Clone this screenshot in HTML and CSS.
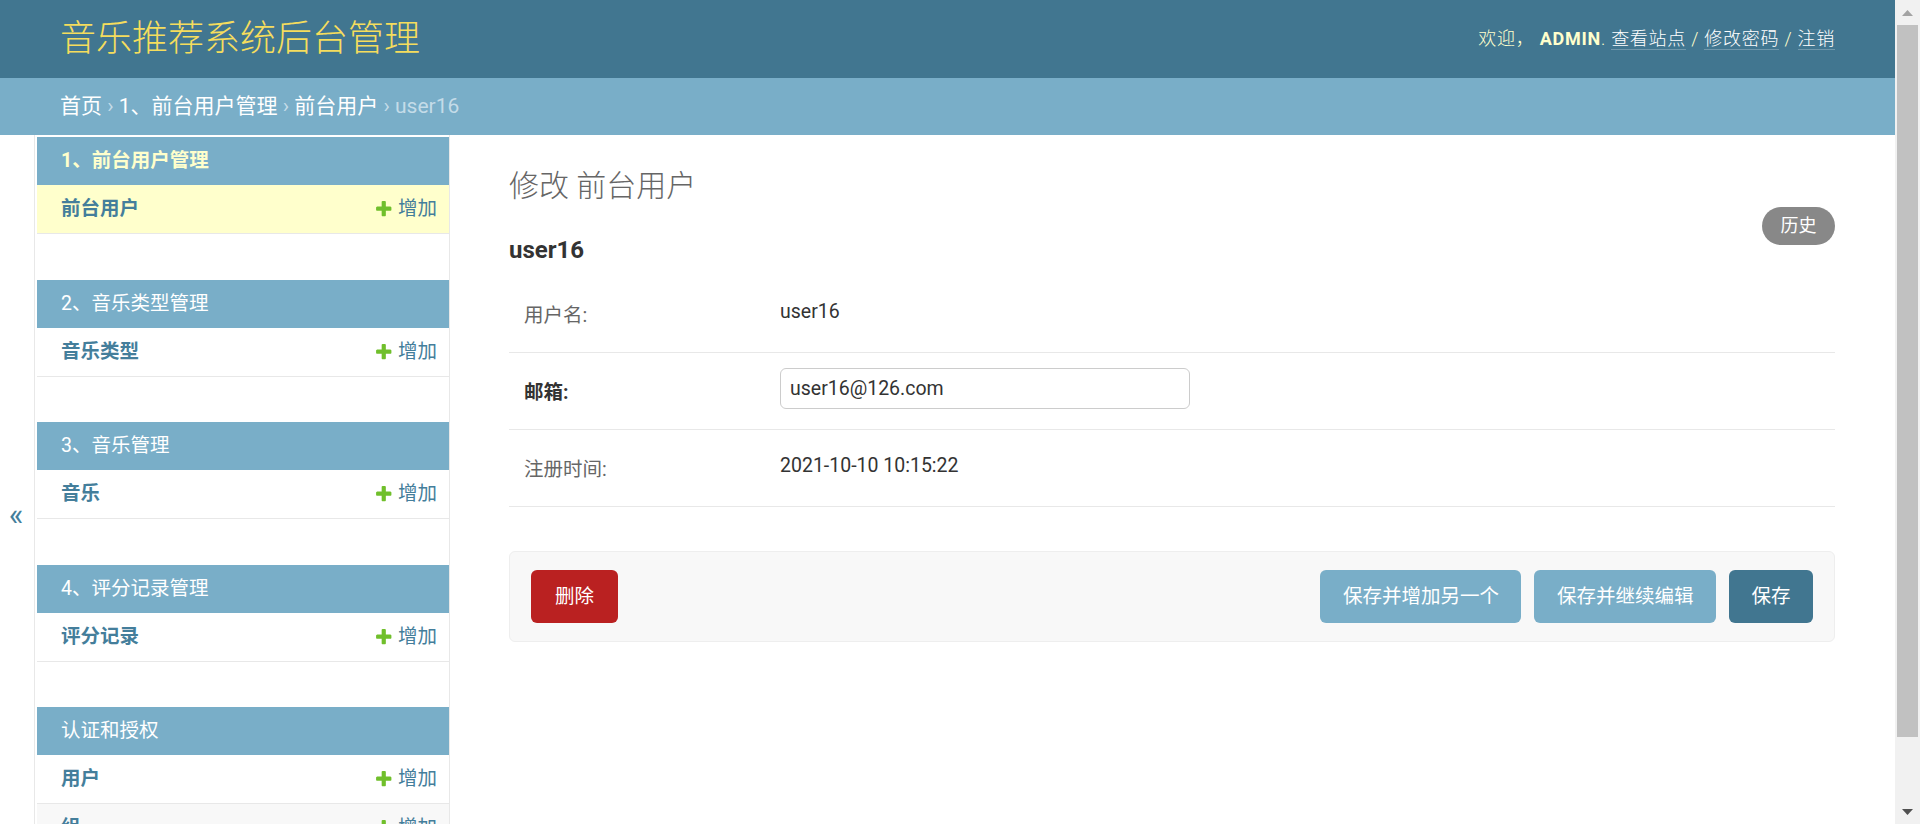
FILE: index.html
```html
<!DOCTYPE html>
<html lang="zh-CN">
<head>
<meta charset="utf-8">
<title>修改 前台用户 | 音乐推荐系统后台管理</title>
<link rel="stylesheet" href="styles.css">
</head>
<body>
<div class="viewport">
  <div class="page">
    <header class="header">
      <div class="branding"><h1 class="site-name"><a href="#">音乐推荐系统后台管理</a></h1></div>
      <div class="user-tools">欢迎， <strong>admin</strong>. <a href="#">查看站点</a> / <a href="#">修改密码</a> / <a href="#">注销</a></div>
    </header>
    <div class="breadcrumbs"><a href="#">首页</a> › <a href="#">1、前台用户管理</a> › <a href="#">前台用户</a> › user16</div>
    <div class="main">
      <div class="toggle-col"><button class="toggle-nav" type="button">«</button></div>
      <nav class="nav-sidebar">
        <div class="module current-app">
          <div class="caption"><a href="#">1、前台用户管理</a></div>
          <div class="model-row current-model"><a class="model-link" href="#">前台用户</a><a class="addlink" href="#"><svg class="plus" viewBox="0 0 1792 1792"><path fill="#70bf2b" d="M1600 796v192q0 40-28 68t-68 28h-416v416q0 40-28 68t-68 28h-192q-40 0-68-28t-28-68v-416h-416q-40 0-68-28t-28-68v-192q0-40 28-68t68-28h416v-416q0-40 28-68t68-28h192q40 0 68 28t28 68v416h416q40 0 68 28t28 68z"/></svg>增加</a></div>
        </div>
        <div class="module">
          <div class="caption"><a href="#">2、音乐类型管理</a></div>
          <div class="model-row"><a class="model-link" href="#">音乐类型</a><a class="addlink" href="#"><svg class="plus" viewBox="0 0 1792 1792"><path fill="#70bf2b" d="M1600 796v192q0 40-28 68t-68 28h-416v416q0 40-28 68t-68 28h-192q-40 0-68-28t-28-68v-416h-416q-40 0-68-28t-28-68v-192q0-40 28-68t68-28h416v-416q0-40 28-68t68-28h192q40 0 68 28t28 68v416h416q40 0 68 28t28 68z"/></svg>增加</a></div>
        </div>
        <div class="module">
          <div class="caption"><a href="#">3、音乐管理</a></div>
          <div class="model-row"><a class="model-link" href="#">音乐</a><a class="addlink" href="#"><svg class="plus" viewBox="0 0 1792 1792"><path fill="#70bf2b" d="M1600 796v192q0 40-28 68t-68 28h-416v416q0 40-28 68t-68 28h-192q-40 0-68-28t-28-68v-416h-416q-40 0-68-28t-28-68v-192q0-40 28-68t68-28h416v-416q0-40 28-68t68-28h192q40 0 68 28t28 68v416h416q40 0 68 28t28 68z"/></svg>增加</a></div>
        </div>
        <div class="module">
          <div class="caption"><a href="#">4、评分记录管理</a></div>
          <div class="model-row"><a class="model-link" href="#">评分记录</a><a class="addlink" href="#"><svg class="plus" viewBox="0 0 1792 1792"><path fill="#70bf2b" d="M1600 796v192q0 40-28 68t-68 28h-416v416q0 40-28 68t-68 28h-192q-40 0-68-28t-28-68v-416h-416q-40 0-68-28t-28-68v-192q0-40 28-68t68-28h416v-416q0-40 28-68t68-28h192q40 0 68 28t28 68v416h416q40 0 68 28t28 68z"/></svg>增加</a></div>
        </div>
        <div class="module">
          <div class="caption"><a href="#">认证和授权</a></div>
          <div class="model-row"><a class="model-link" href="#">用户</a><a class="addlink" href="#"><svg class="plus" viewBox="0 0 1792 1792"><path fill="#70bf2b" d="M1600 796v192q0 40-28 68t-68 28h-416v416q0 40-28 68t-68 28h-192q-40 0-68-28t-28-68v-416h-416q-40 0-68-28t-28-68v-192q0-40 28-68t68-28h416v-416q0-40 28-68t68-28h192q40 0 68 28t28 68v416h416q40 0 68 28t28 68z"/></svg>增加</a></div>
          <div class="model-row row2"><a class="model-link" href="#">组</a><a class="addlink" href="#"><svg class="plus" viewBox="0 0 1792 1792"><path fill="#70bf2b" d="M1600 796v192q0 40-28 68t-68 28h-416v416q0 40-28 68t-68 28h-192q-40 0-68-28t-28-68v-416h-416q-40 0-68-28t-28-68v-192q0-40 28-68t68-28h416v-416q0-40 28-68t68-28h192q40 0 68 28t28 68v416h416q40 0 68 28t28 68z"/></svg>增加</a></div>
        </div>
      </nav>
      <div class="content">
        <h1 class="page-title">修改 前台用户</h1>
        <div class="title-row">
          <h2 class="object-name">user16</h2>
          <a class="historylink" href="#">历史</a>
        </div>
        <form class="change-form">
          <div class="form-row">
            <label class="field-label">用户名:</label>
            <div class="readonly">user16</div>
          </div>
          <div class="form-row">
            <label class="field-label required" for="id_email">邮箱:</label>
            <input class="text-input" id="id_email" type="text" value="user16@126.com">
          </div>
          <div class="form-row">
            <label class="field-label">注册时间:</label>
            <div class="readonly">2021-10-10 10:15:22</div>
          </div>
          <div class="submit-row">
            <a class="deletelink" href="#">删除</a>
            <button class="btn" type="button">保存并增加另一个</button>
            <button class="btn" type="button">保存并继续编辑</button>
            <button class="btn btn-default" type="button">保存</button>
          </div>
        </form>
      </div>
    </div>
  </div>
  <div class="scrollbar">
    <div class="sb-btn"><svg class="sb-arrow" viewBox="0 0 11 6"><polygon points="0,6 5.5,0 11,6" fill="#a3a3a3"/></svg></div>
    <div class="sb-thumb"></div>
    <div class="sb-track"></div>
    <div class="sb-btn"><svg class="sb-arrow" viewBox="0 0 11 6"><polygon points="0,0 11,0 5.5,6" fill="#505050"/></svg></div>
  </div>
</div>
</body>
</html>
```
FILE: styles.css
```css
* { box-sizing: border-box; }

html, body {
  margin: 0;
  padding: 0;
  height: 100%;
  overflow: hidden;
}

body {
  font-family: Roboto, "Noto Sans CJK SC", sans-serif;
  font-size: 21px;
  line-height: 1.3;
  color: #333;
  background: #fff;
}

a { color: #447e9b; text-decoration: none; }

.viewport { display: flex; height: 100vh; }

.page {
  flex: 1;
  min-width: 0;
  display: flex;
  flex-direction: column;
  overflow: hidden;
}

/* header */
.header {
  flex-shrink: 0;
  display: flex;
  justify-content: space-between;
  align-items: center;
  height: 78px;
  padding: 0 60px;
  background: #417690;
  color: #ffc;
}

.site-name {
  margin: 0;
  font-size: 36px;
  font-weight: 300;
  line-height: 48px;
}
.site-name a { color: #f5dd5d; }

.user-tools {
  font-size: 18px;
  font-weight: 300;
  line-height: 24px;
  letter-spacing: 0.75px;
  text-transform: uppercase;
  color: #ffc;
}
.user-tools strong { font-weight: 700; }
.user-tools a {
  color: #fff;
  border-bottom: 1px solid rgba(255, 255, 255, 0.25);
}

/* breadcrumbs */
.breadcrumbs {
  flex-shrink: 0;
  height: 57px;
  padding: 0 60px;
  line-height: 57px;
  font-size: 21px;
  background: #79aec8;
  color: #c4dce8;
}
.breadcrumbs a { color: #fff; }

/* main area */
.main {
  flex: 1;
  min-height: 0;
  display: flex;
}

.toggle-col {
  flex: 0 0 35px;
  border-right: 1px solid #e8e8e8;
}

.toggle-nav {
  display: flex;
  align-items: center;
  justify-content: center;
  width: 100%;
  height: 758px;
  padding: 0 2px 0 0;
  border: 0;
  background: transparent;
  font-family: Roboto, sans-serif;
  font-size: 31px;
  line-height: 1;
  color: #447e9b;
}

.nav-sidebar {
  flex: 0 0 415px;
  padding: 2px 0 0 2px;
  border-right: 1px solid #e8e8e8;
}

.module { margin-bottom: 45.5px; }

.caption {
  height: 48px;
  padding-left: 24px;
  line-height: 48px;
  font-size: 19.5px;
  background: #79aec8;
  color: #fff;
}
.caption a { color: #fff; }
.current-app .caption a { color: #ffc; font-weight: 700; }

.model-row {
  display: flex;
  justify-content: space-between;
  align-items: center;
  height: 49px;
  padding: 0 12px 0 24px;
  border-bottom: 1px solid #e8e8e8;
  font-size: 19.5px;
  line-height: 24px;
  background: #fff;
}
.model-row.current-model { background: #ffc; }
.model-row.row2 { background: #f8f8f8; }

.model-link { font-weight: 700; color: #447e9b; }

.addlink {
  display: flex;
  align-items: center;
  color: #447e9b;
}
.plus {
  width: 19.5px;
  height: 19.5px;
  margin-right: 4.5px;
}

/* content */
.content {
  flex: 1;
  min-width: 0;
  padding: 30px 60px 30px 59px;
}

.page-title {
  margin: 0;
  font-size: 30px;
  font-weight: 300;
  line-height: 42px;
  color: #666;
}

.title-row {
  display: flex;
  justify-content: space-between;
  align-items: flex-start;
}

.object-name {
  margin: 29px 0 12px;
  font-size: 24px;
  font-weight: 700;
  line-height: 28px;
  color: #333;
}

.historylink {
  display: block;
  height: 38px;
  padding: 0 18.5px;
  line-height: 38px;
  font-size: 18px;
  border-radius: 19px;
  background: #888;
  color: #fff;
}

.form-row {
  display: flex;
  height: 77px;
  padding: 15px 15px 0;
  border-bottom: 1px solid #e8e8e8;
  font-size: 19.5px;
}

.field-label {
  flex: 0 0 256px;
  padding-top: 14px;
  line-height: 22px;
  color: #666;
}
.field-label.required { font-weight: 700; color: #333; }

.readonly {
  padding-top: 10px;
  line-height: 22px;
  color: #333;
}

.text-input {
  width: 410px;
  height: 41px;
  padding: 0 9px;
  border: 1px solid #ccc;
  border-radius: 6px;
  font-family: Roboto, "Noto Sans CJK SC", sans-serif;
  font-size: 19.5px;
  color: #333;
  background: #fff;
}

.submit-row {
  display: flex;
  align-items: center;
  gap: 13px;
  margin-top: 44px;
  padding: 18px 21px;
  border: 1px solid #eee;
  border-radius: 6px;
  background: #f8f8f8;
}

.deletelink {
  display: block;
  margin-right: auto;
  height: 53px;
  padding: 0 24px;
  line-height: 53px;
  font-size: 19.5px;
  border-radius: 6px;
  background: #ba2121;
  color: #fff;
}

.btn {
  height: 53px;
  padding: 0 22.5px;
  border: 0;
  border-radius: 6px;
  font-family: Roboto, "Noto Sans CJK SC", sans-serif;
  font-size: 19.5px;
  line-height: 53px;
  background: #79aec8;
  color: #fff;
}
.btn-default { background: #417690; }

/* scrollbar */
.scrollbar {
  flex: 0 0 25px;
  display: flex;
  flex-direction: column;
  background: #f1f1f1;
}
.sb-btn {
  flex: 0 0 25px;
  display: flex;
  align-items: center;
  justify-content: center;
}
.sb-arrow { width: 11px; height: 6px; }
.sb-thumb {
  flex: 0 0 712px;
  margin: 0 2px;
  background: #c1c1c1;
}
.sb-track { flex: 1; }
```
